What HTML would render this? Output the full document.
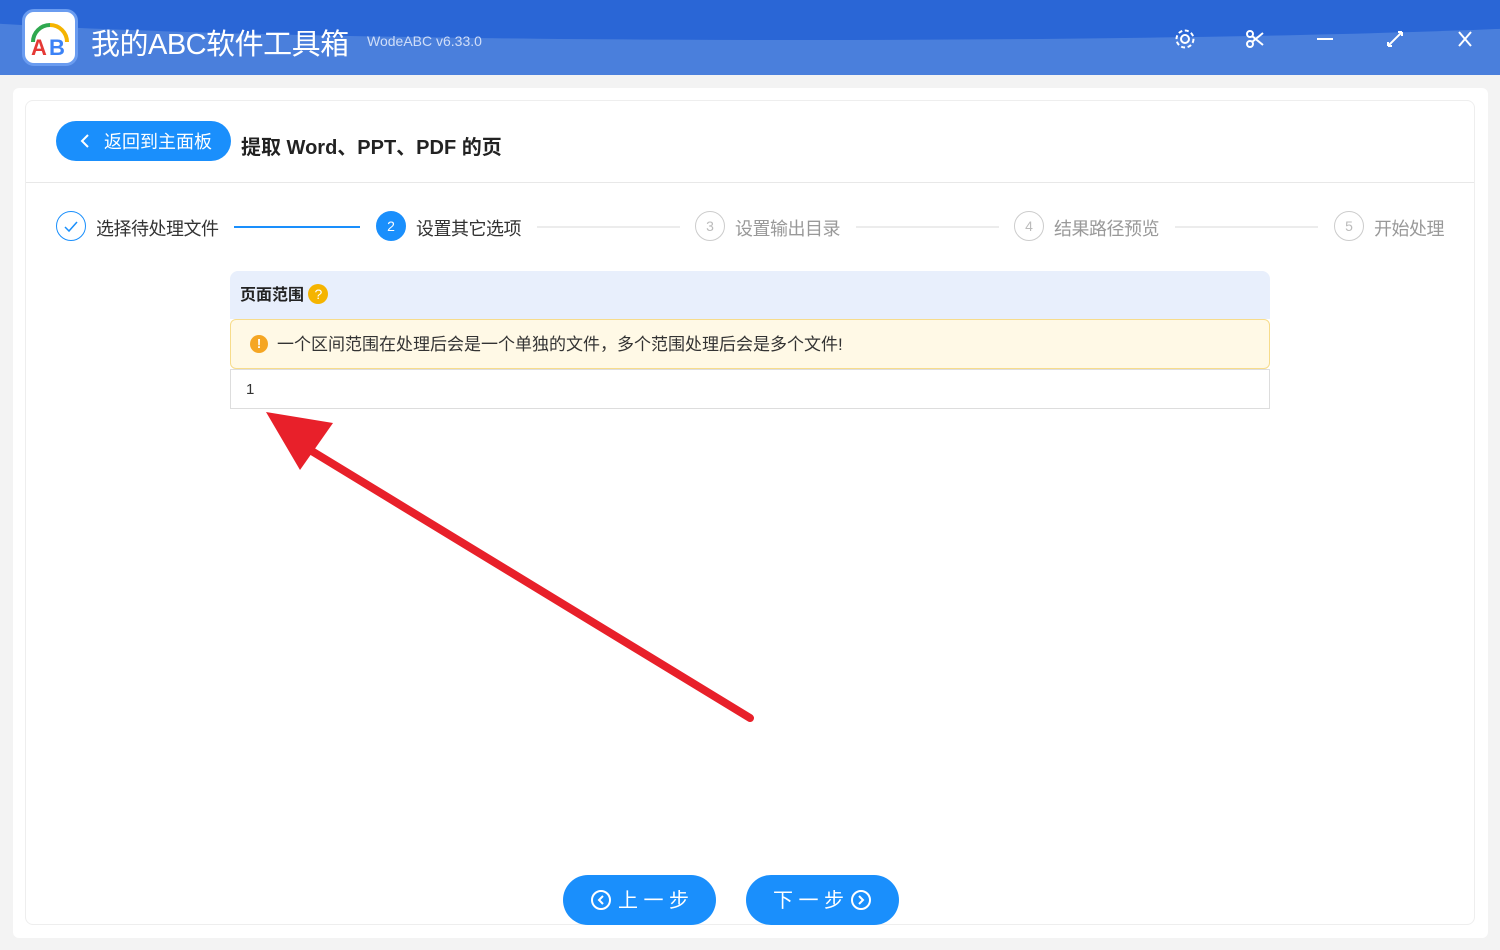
<!DOCTYPE html>
<html><head><meta charset="utf-8"><style>
*{margin:0;padding:0;box-sizing:border-box}
body{width:1500px;height:950px;background:#f3f3f3;font-family:"Liberation Sans","Noto Sans CJK SC",sans-serif;position:relative;overflow:hidden}
.top{position:absolute;left:0;top:0;width:1500px;height:75px;background:#4a7fdc;overflow:hidden}
.top .wave{position:absolute;left:-100px;top:-60px;width:1800px;height:100px;background:#2a66d6;border-radius:0 0 50% 50%/0 0 30% 30%}
.logo{position:absolute;left:22px;top:9px;width:56px;height:57px;background:#fff;border-radius:12px;border:3px solid #6a9cf0}
.title{position:absolute;left:91px;top:21px;color:#fff;font-size:29px;letter-spacing:-0.5px}
.ver{position:absolute;left:367px;top:33px;color:#d0def8;font-size:14px}
.card{position:absolute;left:13px;top:88px;width:1475px;height:850px;background:#fff;border-radius:6px}
.inner{position:absolute;left:25px;top:100px;width:1450px;height:825px;border:1px solid #eee;border-radius:8px;background:#fff}
.back{position:absolute;left:56px;top:121px;width:175px;height:40px;background:#1a8ffc;border-radius:20px;color:#fff;font-size:18px;line-height:42px;padding-left:48px}
.h{position:absolute;left:241px;top:131px;font-size:20px;font-weight:bold;color:#222}
.sep{position:absolute;left:26px;top:182px;width:1448px;height:1px;background:#e8e8e8}
.st{position:absolute;top:211px;width:30px;height:30px;border-radius:50%;border:1px solid #ccc;color:#bbb;font-size:14px;text-align:center;line-height:28px}
.sl{position:absolute;top:215px;font-size:18px;color:#999;letter-spacing:-0.5px}
.ln{position:absolute;top:226px;height:2px;background:#ececec}
.panel{position:absolute;left:230px;top:271px;width:1040px}
.ph{height:48px;background:#e8effc;border-radius:8px 8px 0 0;padding-left:10px;line-height:50px;font-weight:bold;font-size:16px;color:#222}
.warn{height:50px;background:#fff9e6;border:1px solid #f7dc8b;border-radius:6px;line-height:50px;font-size:17px;color:#333;padding-left:46px;position:relative}
.inp{height:40px;border:1px solid #ddd;line-height:40px;padding-left:15px;font-size:15px;color:#333}
.btn{position:absolute;top:875px;width:153px;height:50px;background:#1a8ffc;border-radius:25px;color:#fff;font-size:20px;line-height:52px;text-align:center}
</style></head><body>
<div class="top"><div class="wave"></div>
<div class="logo"><svg width="50" height="51" viewBox="0 0 50 51"><path d="M8 30 A17 17 0 0 1 25 13" stroke="#2fa84f" stroke-width="4" fill="none"/><path d="M25 13 A17 17 0 0 1 42 30" stroke="#f5b400" stroke-width="4" fill="none"/><text x="6" y="43" font-size="22" font-family="Liberation Sans" fill="#e53935" font-weight="bold">A</text><text x="24" y="43" font-size="22" font-family="Liberation Sans" fill="#3b82f6" font-weight="bold">B</text></svg></div>
<div class="title">我的ABC软件工具箱</div><div class="ver">WodeABC v6.33.0</div>
<svg style="position:absolute;left:1170px;top:25px" width="310" height="30" stroke="#fff" stroke-width="2" fill="none"><circle cx="15" cy="14" r="4"/><circle cx="15" cy="14" r="8.5" stroke-dasharray="4 2.6"/><circle cx="80" cy="19" r="3"/><circle cx="80" cy="9" r="3"/><path d="M82 11 L93 20 M82 17 L93 8"/><path d="M147 14 H163"/><path d="M218 21 L232 7 M218 21 v-4 M218 21 h4 M232 7 h-4 M232 7 v4"/><path d="M289 7 L301 21 M301 7 L289 21"/></svg>
</div>
<div class="card"></div><div class="inner"></div>
<div class="back"><svg style="position:absolute;left:24px;top:13px" width="10" height="14"><path d="M8 1 L2 7 L8 13" stroke="#fff" stroke-width="2" fill="none"/></svg>返回到主面板</div>
<div class="h">提取 Word、PPT、PDF 的页</div>
<div class="sep"></div>
<div class="st" style="left:56px;border-color:#1a8ffc"><svg width="16" height="14" style="margin-top:8px"><path d="M2 7 L6 11 L14 2" stroke="#1a8ffc" stroke-width="1.5" fill="none"/></svg></div>
<div class="sl" style="left:96px;color:#333">选择待处理文件</div>
<div class="ln" style="left:234px;width:126px;background:#1a8ffc"></div>
<div class="st" style="left:376px;background:#1a8ffc;border-color:#1a8ffc;color:#fff">2</div>
<div class="sl" style="left:416px;color:#333">设置其它选项</div>
<div class="ln" style="left:537px;width:143px"></div>
<div class="st" style="left:695px">3</div><div class="sl" style="left:735px">设置输出目录</div>
<div class="ln" style="left:856px;width:143px"></div>
<div class="st" style="left:1014px">4</div><div class="sl" style="left:1054px">结果路径预览</div>
<div class="ln" style="left:1175px;width:143px"></div>
<div class="st" style="left:1334px">5</div><div class="sl" style="left:1374px">开始处理</div>
<div class="panel">
<div class="ph">页面范围 <span style="display:inline-block;width:20px;height:20px;border-radius:50%;background:#f5b400;color:#fff;font-size:14px;line-height:20px;text-align:center;vertical-align:1px;font-weight:normal">?</span></div>
<div class="warn"><span style="position:absolute;left:19px;top:15px;width:18px;height:18px;border-radius:50%;background:#f5a623;color:#fff;font-size:13px;line-height:18px;text-align:center;font-weight:bold">!</span>一个区间范围在处理后会是一个单独的文件，多个范围处理后会是多个文件!</div>
<div class="inp">1</div>
</div>
<svg style="position:absolute;left:0;top:0" width="1500" height="950"><path d="M750 718 L310 450" stroke="#e8202a" stroke-width="8" stroke-linecap="round"/><polygon points="266,412 333,423 300,470" fill="#e8202a"/></svg>
<div class="btn" style="left:563px"><svg width="22" height="22" style="vertical-align:-4px;margin-right:6px"><circle cx="11" cy="11" r="9" stroke="#fff" stroke-width="2" fill="none"/><path d="M13 7 L9 11 L13 15" stroke="#fff" stroke-width="2" fill="none"/></svg>上 一 步</div>
<div class="btn" style="left:746px">下 一 步<svg width="22" height="22" style="vertical-align:-4px;margin-left:6px"><circle cx="11" cy="11" r="9" stroke="#fff" stroke-width="2" fill="none"/><path d="M9 7 L13 11 L9 15" stroke="#fff" stroke-width="2" fill="none"/></svg></div>
</body></html>
